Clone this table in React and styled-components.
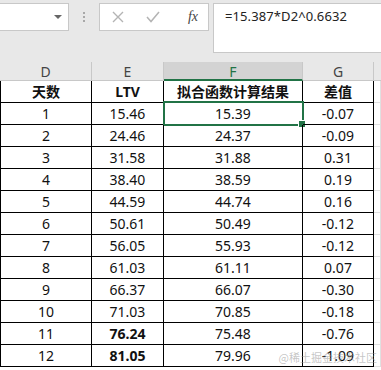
import React from 'react'
import styled, { createGlobalStyle } from 'styled-components'

const GlobalStyle = createGlobalStyle`
  * { box-sizing: border-box; }
  body {
    margin: 0;
    background: #ffffff;
    font-family: "Noto Sans", "Noto Sans CJK SC", sans-serif;
  }
`

const Page = styled.div`
  position: relative;
  width: 381px;
  height: 370px;
  overflow: hidden;
  background: #fff;
`

const Toolbar = styled.div`
  height: 62px;
  background: #e8e8e8;
  display: flex;
  align-items: flex-start;
  padding-top: 3px;
`

const NameBox = styled.div`
  width: 69px;
  height: 28px;
  background: #fff;
  border: 1px solid #c8c8c8;
  border-left: none;
  display: flex;
  align-items: center;
  justify-content: flex-end;
  padding-right: 6px;
`

const Caret = styled.span`
  width: 0;
  height: 0;
  border-left: 4px solid transparent;
  border-right: 4px solid transparent;
  border-top: 4px solid #666;
`

const Grip = styled.div`
  width: 30px;
  height: 28px;
  display: flex;
  flex-direction: column;
  align-items: center;
  justify-content: center;
  gap: 2px;
  span {
    width: 2px;
    height: 2px;
    background: #a8a8a8;
  }
`

const ButtonBox = styled.div`
  width: 110px;
  height: 28px;
  background: #fff;
  border: 1px solid #c8c8c8;
  display: flex;
  align-items: center;
  padding-left: 11px;
  gap: 0;
`

const ToolIcon = styled.div`
  width: ${p => p.$w}px;
  display: flex;
  align-items: center;
  justify-content: center;
`

const Fx = styled.span`
  font-family: "Liberation Serif", "DejaVu Serif", serif;
  font-style: italic;
  font-size: 14px;
  color: #444;
  margin-left: 4px;
`

const FormulaBox = styled.div`
  flex: 1;
  margin-left: 4px;
  height: 50px;
  background: #fff;
  border: 1px solid #c8c8c8;
  border-right: none;
  padding: 3px 0 0 11px;
  font-size: 13px;
  color: #222;
  letter-spacing: 0.1px;
`

const Grid = styled.div`
  display: grid;
  grid-template-columns: 92px 72px 139px 71px 1fr;
`

const ColHead = styled.div`
  height: 19px;
  background: ${p => (p.$active ? '#d3d3d3' : '#e8e8e8')};
  border-right: 1px solid #c8c8c8;
  border-bottom: ${p => (p.$active ? '2px solid #217346' : '1px solid #c8c8c8')};
  color: ${p => (p.$active ? '#217346' : '#444')};
  font-size: 14px;
  line-height: 17px;
  text-align: center;
  padding-top: 1px;
`

const Cell = styled.div`
  position: relative;
  height: 22px;
  border-right: 1px solid ${p => (p.$blank ? '#e0e0e0' : '#000')};
  border-bottom: 1px solid ${p => (p.$blank ? '#e0e0e0' : '#000')};
  border-left: ${p => (p.$first ? '1px solid #000' : 'none')};
  font-size: 14px;
  line-height: 21px;
  text-align: center;
  color: #111;
  font-weight: ${p => (p.$bold ? 700 : 400)};
`

const Selection = styled.div`
  position: absolute;
  left: -1px;
  top: -2px;
  right: -2px;
  bottom: -2px;
  border: 2px solid #217346;
  pointer-events: none;
  &::after {
    content: '';
    position: absolute;
    right: -4px;
    bottom: -4px;
    width: 6px;
    height: 6px;
    background: #217346;
    border: 1px solid #fff;
  }
`

const Watermark = styled.div`
  position: absolute;
  right: 4px;
  bottom: 5px;
  font-size: 11px;
  color: rgba(150, 150, 150, 0.55);
  font-family: "Noto Sans CJK SC", sans-serif;
`

const rows = [
  [1, '15.46', '15.39', '-0.07'],
  [2, '24.46', '24.37', '-0.09'],
  [3, '31.58', '31.88', '0.31'],
  [4, '38.40', '38.59', '0.19'],
  [5, '44.59', '44.74', '0.16'],
  [6, '50.61', '50.49', '-0.12'],
  [7, '56.05', '55.93', '-0.12'],
  [8, '61.03', '61.11', '0.07'],
  [9, '66.37', '66.07', '-0.30'],
  [10, '71.03', '70.85', '-0.18'],
  [11, '76.24', '75.48', '-0.76', true],
  [12, '81.05', '79.96', '-1.09', true],
]

export default function App() {
  return (
    <Page>
      <GlobalStyle />
      <Toolbar>
        <NameBox>
          <Caret />
        </NameBox>
        <Grip>
          <span />
          <span />
          <span />
        </Grip>
        <ButtonBox>
          <ToolIcon $w={14}>
            <svg width="12" height="12" viewBox="0 0 12 12">
              <path d="M1 1 L11 11 M11 1 L1 11" stroke="#b4b4b4" strokeWidth="1.4" fill="none" />
            </svg>
          </ToolIcon>
          <ToolIcon $w={56}>
            <svg width="14" height="12" viewBox="0 0 14 12">
              <path d="M1 6 L5 10.5 L13 1" stroke="#b4b4b4" strokeWidth="1.5" fill="none" />
            </svg>
          </ToolIcon>
          <ToolIcon $w={20}>
            <Fx>fx</Fx>
          </ToolIcon>
        </ButtonBox>
        <FormulaBox>=15.387*D2^0.6632</FormulaBox>
      </Toolbar>
      <Grid>
        <ColHead>D</ColHead>
        <ColHead>E</ColHead>
        <ColHead $active>F</ColHead>
        <ColHead>G</ColHead>
        <ColHead style={{ borderRight: 'none' }} />

        <Cell $first $bold>天数</Cell>
        <Cell $bold>LTV</Cell>
        <Cell $bold>拟合函数计算结果</Cell>
        <Cell $bold>差值</Cell>
        <Cell $blank />

        {rows.map(([d, e, f, g, bold]) => (
          <React.Fragment key={d}>
            <Cell $first>{d}</Cell>
            <Cell $bold={bold}>{e}</Cell>
            <Cell>
              {f}
              {d === 1 && <Selection />}
            </Cell>
            <Cell>{g}</Cell>
            <Cell $blank />
          </React.Fragment>
        ))}
      </Grid>
      <Watermark>@稀土掘金技术社区</Watermark>
    </Page>
  )
}
